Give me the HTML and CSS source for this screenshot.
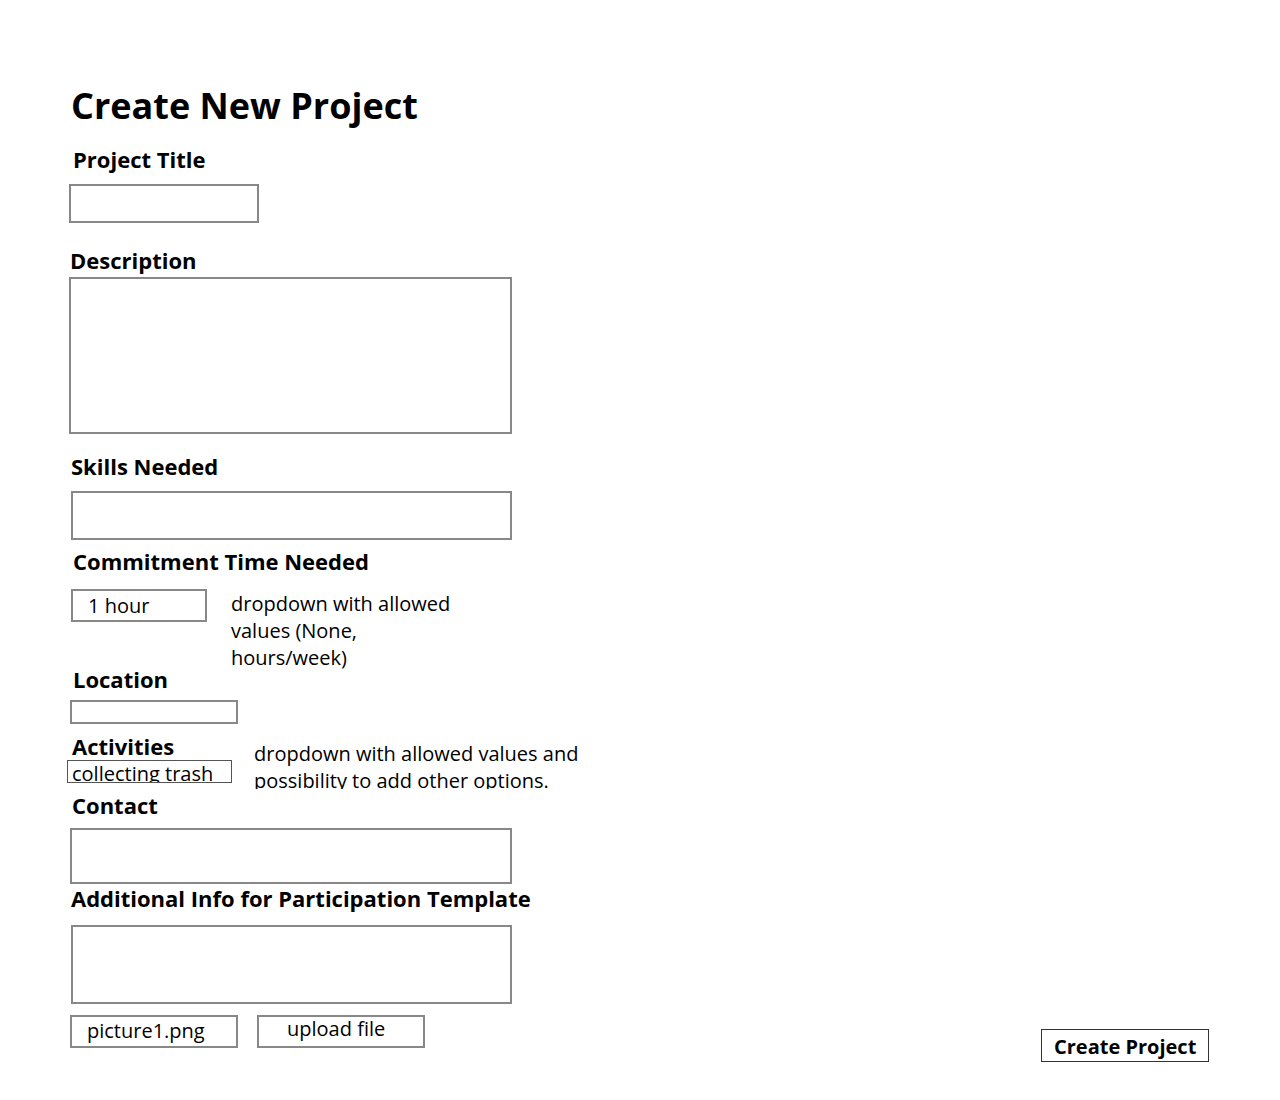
FILE: index.html
```html
<!DOCTYPE html>
<html lang="en">
<head>
<meta charset="utf-8">
<title>Create New Project</title>
<link rel="stylesheet" href="styles.css">
</head>
<body>
<div class="page">
  <h1 class="heading">Create New Project</h1>

  <div class="label label-title">Project Title</div>
  <div class="box box-title"></div>

  <div class="label label-desc">Description</div>
  <div class="box box-desc"></div>

  <div class="label label-skills">Skills Needed</div>
  <div class="box box-skills"></div>

  <div class="label label-commit">Commitment Time Needed</div>
  <div class="row row-commit">
    <div class="box box-hour">1 hour</div>
    <div class="note note-commit">dropdown with allowed values (None, hours/week)</div>
  </div>

  <div class="label label-location">Location</div>
  <div class="box box-location"></div>

  <div class="row row-activities">
    <div class="field-col">
      <div class="label label-activities">Activities</div>
      <div class="box-activity">collecting trash</div>
    </div>
    <div class="note note-activities">dropdown with allowed values and possibility to add other options.</div>
  </div>

  <div class="label label-contact">Contact</div>
  <div class="box box-contact"></div>

  <div class="label label-additional">Additional Info for Participation Template</div>
  <div class="box box-additional"></div>

  <div class="row row-files">
    <div class="box box-file">picture1.png</div>
    <div class="box box-upload">upload file</div>
    <button class="submit" type="button">Create Project</button>
  </div>
</div>
</body>
</html>
```

FILE: styles.css
```css
* { box-sizing: border-box; }

html, body {
  margin: 0;
  background: #ffffff;
}

.page {
  padding: 81px 0 0 69px;
  width: 1209px;
  font-family: "Open Sans", "Noto Sans", sans-serif;
  color: #000;
}

.heading {
  margin: 0 0 0 2px;
  font-size: 36px;
  font-weight: 700;
  line-height: 49px;
}

.label {
  font-size: 22px;
  font-weight: 700;
  line-height: 27px;
  white-space: nowrap;
}

.box {
  border: 2px solid #888;
  background: #fff;
}

.row {
  display: flex;
  align-items: flex-start;
}

.note {
  font-size: 20px;
  line-height: 27px;
}

/* Project title */
.label-title { margin: 16px 0 0 4px; }
.box-title { margin-top: 11px; width: 190px; height: 39px; }

/* Description */
.label-desc { margin: 24px 0 0 1px; }
.box-desc { margin-top: 3px; width: 443px; height: 157px; }

/* Skills */
.label-skills { margin: 19px 0 0 2px; }
.box-skills { margin: 11px 0 0 2px; width: 441px; height: 49px; }

/* Commitment */
.label-commit { margin: 8px 0 0 4px; }
.row-commit { margin: 14px 0 0 2px; height: 33px; }
.box-hour {
  width: 136px;
  height: 33px;
  padding: 1px 0 0 15px;
  font-size: 20px;
  line-height: 27px;
  flex: none;
}
.note-commit { margin: 1px 0 0 24px; width: 230px; flex: none; }

/* Location */
.label-location { margin: 44px 0 0 4px; }
.box-location { margin: 7px 0 0 1px; width: 168px; height: 24px; }

/* Activities */
.row-activities { margin-top: 9px; height: 50px; }
.field-col { display: flex; flex-direction: column; align-items: flex-start; flex: none; }
.label-activities { margin-left: 3px; }
.box-activity {
  margin-left: -2px;
  width: 165px;
  height: 23px;
  border: 1px solid #555;
  padding-left: 4px;
  font-size: 20px;
  line-height: 26px;
  overflow: hidden;
  white-space: nowrap;
}
.note-activities {
  margin: 7px 0 0 22px;
  width: 340px;
  height: 49px;
  overflow: hidden;
  flex: none;
}

/* Contact */
.label-contact { margin: 9px 0 0 3px; }
.box-contact { margin: 9px 0 0 1px; width: 442px; height: 56px; }

/* Additional */
.label-additional { margin: 1px 0 0 2px; }
.box-additional { margin: 13px 0 0 2px; width: 441px; height: 79px; }

/* Files + submit */
.row-files { margin: 11px 0 0 1px; }
.box-file {
  width: 168px;
  height: 33px;
  padding: 0 0 0 15px;
  font-size: 20px;
  line-height: 27px;
  flex: none;
}
.box-upload {
  margin-left: 19px;
  width: 168px;
  height: 33px;
  padding: 0 0 0 28px;
  font-size: 20px;
  line-height: 23px;
  flex: none;
}
.submit {
  margin: 14px 0 0 auto;
  width: 168px;
  height: 33px;
  padding: 2px 0 0 12px;
  border: 1px solid #333;
  background: #fff;
  color: #000;
  font-family: "Open Sans", "Noto Sans", sans-serif;
  font-size: 20px;
  font-weight: 700;
  line-height: 27px;
  text-align: left;
  vertical-align: top;
}
```
